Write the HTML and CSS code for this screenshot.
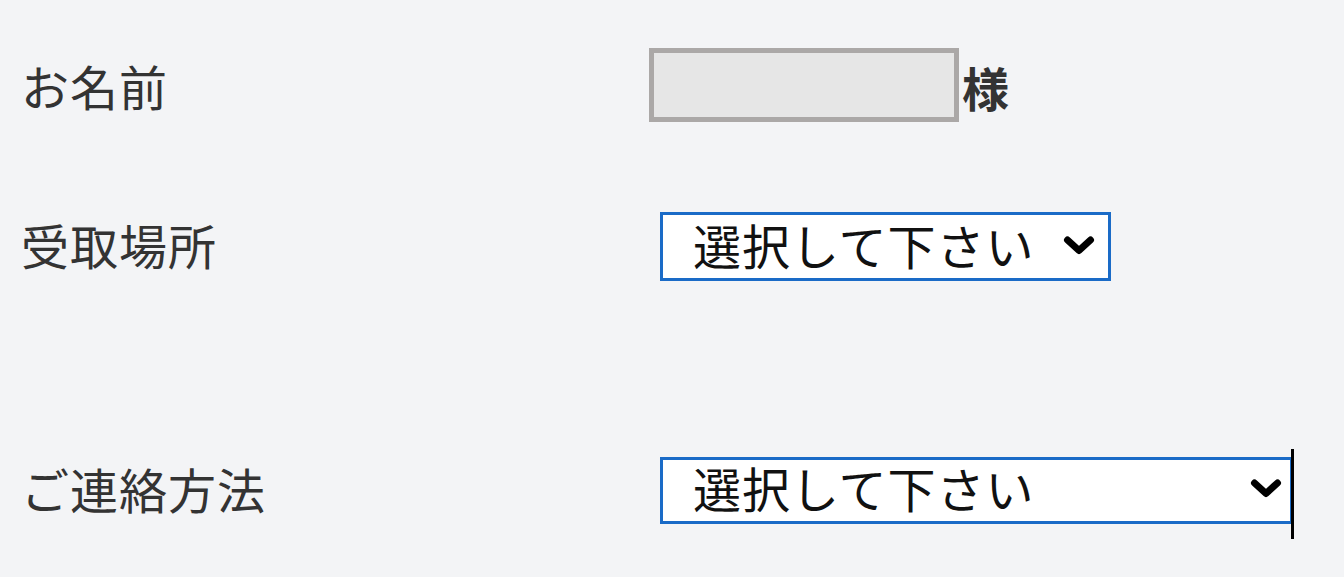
FILE: index.html
```html
<!DOCTYPE html>
<html lang="ja">
<head>
<meta charset="utf-8">
<title>フォーム</title>
<link rel="stylesheet" href="styles.css">
</head>
<body>
<form class="form">
  <div class="row r1">
    <div class="label">お名前</div>
    <div class="value">
      <div class="name-box"></div><span class="suffix">様</span>
    </div>
  </div>
  <div class="row r2">
    <div class="label">受取場所</div>
    <div class="value">
      <div class="select s1">
        <span class="select-text">選択して下さい</span>
        <svg class="chev" width="32" height="22" viewBox="0 0 32 22"><polyline points="4.5,5 16,15.5 27.5,5" fill="none" stroke="#000" stroke-width="7" stroke-linejoin="round" stroke-linecap="round"/></svg>
      </div>
    </div>
  </div>
  <div class="row r3">
    <div class="label">ご連絡方法</div>
    <div class="value">
      <div class="select s2">
        <span class="select-text">選択して下さい</span>
        <svg class="chev" width="32" height="22" viewBox="0 0 32 22"><polyline points="4.5,5 16,15.5 27.5,5" fill="none" stroke="#000" stroke-width="7" stroke-linejoin="round" stroke-linecap="round"/></svg>
        <span class="caret"></span>
      </div>
    </div>
  </div>
</form>
</body>
</html>
```

FILE: styles.css
```css
html, body {
  margin: 0;
  padding: 0;
}
body {
  background: #f3f4f6;
  font-family: "Noto Sans CJK JP", sans-serif;
  color: #333;
  width: 1344px;
  height: 577px;
  overflow: hidden;
}
.form {
  padding-left: 21px;
}
.row {
  display: flex;
  align-items: center;
}
.r1 { height: 176px; }
.r2 { height: 142px; }
.r3 { height: 146px; margin-top: 100px; }
.label {
  width: 628px;
  font-size: 48px;
  line-height: 1;
  color: #333;
  letter-spacing: 1px;
  padding-bottom: 7px;
}
.value {
  display: flex;
  align-items: center;
}
.name-box {
  width: 300px;
  height: 64px;
  border: 5px solid #aba8a7;
  background: #e6e6e6;
  margin-top: -6px;
}
.suffix {
  margin-left: 3px;
  font-size: 47px;
  font-weight: bold;
  line-height: 1;
  color: #333;
  padding-bottom: 4px;
}
.select {
  position: relative;
  margin-left: 11px;
  display: flex;
  align-items: center;
  justify-content: space-between;
  border: 3px solid #1a6bc7;
  background: #fff;
  box-sizing: border-box;
  padding-left: 30px;
  padding-right: 13px;
}
.s1 { width: 451px; height: 69px; margin-top: -1px; }
.s2 { width: 633px; height: 67px; margin-top: -2px; padding-right: 8px; }
.select-text {
  font-size: 48px;
  line-height: 1;
  color: #111;
  letter-spacing: 1px;
  padding-bottom: 6px;
}
.chev {
  display: block;
  margin-top: -2px;
}
.caret {
  position: absolute;
  right: -4px;
  top: -11px;
  width: 3px;
  height: 90px;
  background: #000;
}
```
